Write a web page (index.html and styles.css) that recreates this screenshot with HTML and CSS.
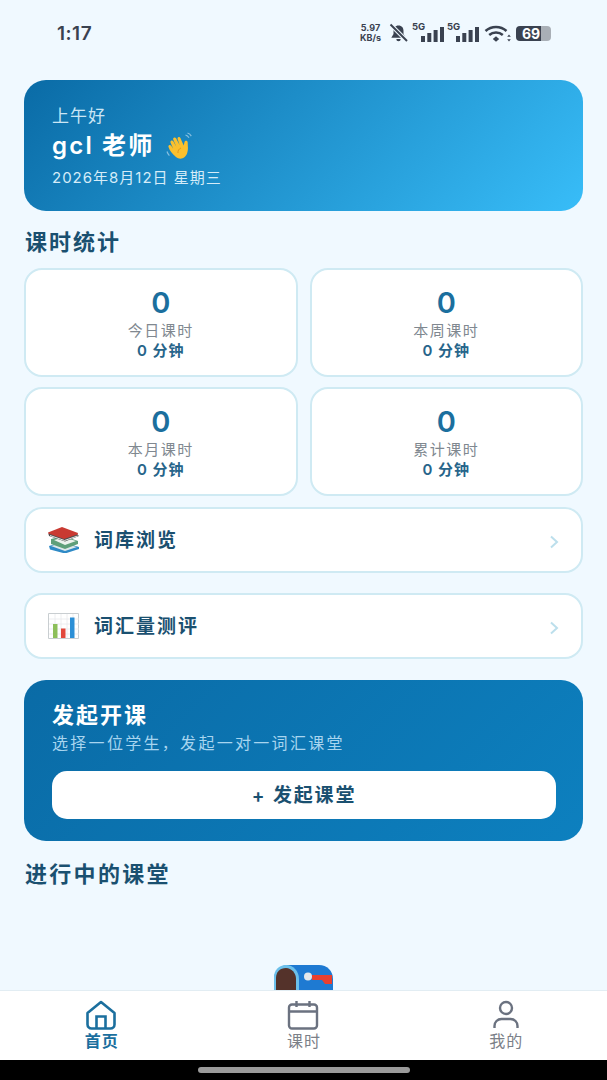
FILE: index.html
```html
<!DOCTYPE html>
<html lang="zh-CN">
<head>
  <meta charset="UTF-8" />
  <meta name="viewport" content="width=device-width, initial-scale=1" />
  <title>首页</title>
  <link rel="stylesheet" href="styles.css">
</head>
<body>
  <div class="app">
    <div class="status-bar">
      <span class="clock">1:17</span>
      <div class="status-icons">
        <span class="speed">5.97<br>KB/s</span>
        <svg class="ic-bell" width="21" height="20" viewBox="0 0 21 20">
          <path d="M10.500 2.500c-3.300 0-5 2.400-5 5.300v3.200l-2.200 3.800h14.400L15.500 11V7.800c0-2.900-1.700-5.300-5-5.300z" fill="#3a4250"/>
          <path d="M8.300 16h4.400a2.200 2.200 0 0 1-4.400 0z" fill="#3a4250"/>
          <path d="M2.500 1.500L19 18" stroke="#f0f9ff" stroke-width="4"/>
          <path d="M2.500 1.500L19 18" stroke="#3a4250" stroke-width="1.900"/>
        </svg>
        <div class="net">
          <span class="net-label">5G</span>
          <svg width="23" height="15" viewBox="0 0 23 15"><path d="M0 9h4v6H0zM6.300 6h4v9h-4zM12.600 3h4v12h-4zM19 0h4v15h-4z" fill="#3a4250"/></svg>
        </div>
        <div class="net">
          <span class="net-label">5G</span>
          <svg width="23" height="15" viewBox="0 0 23 15"><path d="M0 9h4v6H0zM6.300 6h4v9h-4zM12.600 3h4v12h-4zM19 0h4v15h-4z" fill="#3a4250"/></svg>
        </div>
        <svg class="ic-wifi" width="27" height="17" viewBox="0 0 27 17">
          <path d="M1.500 6C7.500.6 16.500.6 22.500 6M5.200 10c3.800-3.300 9.800-3.300 13.600 0" fill="none" stroke="#3a4250" stroke-width="2.500"/>
          <path d="M12 11.200l3.200 2.800L12 16.800 8.800 14z" fill="#3a4250"/>
          <path d="M25 9.500l1.800 2.300h-3.600zM25 16.500l-1.800-2.300h3.600z" fill="#3a4250"/>
        </svg>
        <div class="battery"><span class="battery-level">69</span></div>
      </div>
    </div>

    <main class="content">
      <section class="hero">
        <p class="hero-greet">上午好</p>
        <h1 class="hero-name">gcl 老师
          <svg class="wave" width="30" height="28" viewBox="0 0 30 28">
            <path d="M10 25C6 22 3.500 18 2.500 15c-.6-1.800 1.700-2.800 2.700-1.200l2 3L4.500 10.500c-.7-1.800 1.800-3 2.800-1.300l3 5.500L7.200 7.500c-.7-1.900 1.900-3 2.900-1.200l3.600 7L11.600 7c-.5-1.800 2-2.700 2.800-1l3.300 7.500.8-3.500c.5-2 3.300-1.700 3.200.3-.1 3.300.8 6-.3 10C20 26.500 14 28.500 10 25z" fill="#fbc02d"/>
            <path d="M15 16c-2 .8-3.300 2.600-3 5" fill="none" stroke="#e0961a" stroke-width="1"/>
            <path d="M1 19.500c.5 1.600 1.300 3 2.400 4.100" fill="none" stroke="#86bfe0" stroke-width="1.200"/>
            <path d="M19.500 3c1.500.4 2.700 1.400 3.500 2.800M21.500 1c1.600.5 3 1.600 3.800 3.100" fill="none" stroke="#86bfe0" stroke-width="1.200"/>
          </svg>
        </h1>
        <p class="hero-date">2026年8月12日 星期三</p>
      </section>

      <h2 class="section-title stats-title">课时统计</h2>
      <div class="stats">
        <div class="stat"><div class="stat-num">0</div><div class="stat-label">今日课时</div><div class="stat-min">0 分钟</div></div>
        <div class="stat"><div class="stat-num">0</div><div class="stat-label">本周课时</div><div class="stat-min">0 分钟</div></div>
        <div class="stat"><div class="stat-num">0</div><div class="stat-label">本月课时</div><div class="stat-min">0 分钟</div></div>
        <div class="stat"><div class="stat-num">0</div><div class="stat-label">累计课时</div><div class="stat-min">0 分钟</div></div>
      </div>

      <div class="link-row first">
        <svg class="link-icon" width="32" height="26" viewBox="0 0 32 26">
          <path d="M1 19l13-4 17 5v2L17 26.500 2 22.500z" fill="#2f8ac6"/>
          <path d="M3 19l11-3 15 4-12 4z" fill="#dfe8ea"/>
          <path d="M3 12l13-3 14 5v3l-13 5-14-5z" fill="#5f9f7a"/>
          <path d="M6 13l10-2.500 12 3.500-11 4z" fill="#eef2ee"/>
          <path d="M0 5.500L14 0l16 6-.5 2L16 13 1 8z" fill="#c93a32"/>
          <path d="M.5 6.500L16 12 29.500 7.500 31 9 17 14.500 1 9z" fill="#4b4f52"/>
          <path d="M2 8.500L16.500 13.500 29.500 9" fill="none" stroke="#e6e6e0" stroke-width="1"/>
        </svg>
        <span class="link-text">词库浏览</span>
        <svg class="chev" width="10" height="14" viewBox="0 0 10 14"><path d="M2 1.500L8 7l-6 5.500" fill="none" stroke="#bcdfec" stroke-width="2"/></svg>
      </div>
      <div class="link-row second">
        <svg class="link-icon" width="32" height="26" viewBox="0 0 32 26">
          <path d="M.5.500h30v25H.5z" fill="#fff" stroke="#c9ced1"/>
          <path d="M1 6h30M1 11h30M1 16h30M1 21h30M7 1v24M13 1v24M19 1v24M25 1v24" stroke="#e8eaec" stroke-width=".8"/>
          <path d="M5 11h4.500v14H5z" fill="#8dbf5a"/>
          <path d="M13 15.500h4.500V25H13z" fill="#e2483c"/>
          <path d="M22 4.500h4.500V25H22z" fill="#2b8fd6"/>
        </svg>
        <span class="link-text">词汇量测评</span>
        <svg class="chev" width="10" height="14" viewBox="0 0 10 14"><path d="M2 1.500L8 7l-6 5.500" fill="none" stroke="#bcdfec" stroke-width="2"/></svg>
      </div>

      <section class="cta">
        <h2 class="cta-title">发起开课</h2>
        <p class="cta-sub">选择一位学生，发起一对一词汇课堂</p>
        <button class="cta-btn">+ 发起课堂</button>
      </section>

      <h2 class="section-title live-title">进行中的课堂</h2>

      <div class="empty">
        <svg width="60" height="60" viewBox="0 0 60 60">
          <path d="M14 0h31c8 0 14 6 14 14v46H0V14C0 6 6 0 14 0z" fill="#1e7ad2"/>
          <path d="M12 0c7 0 13 6 13 14v46H0V12C0 5 5 0 12 0z" fill="#6cc0ea"/>
          <path d="M12 3c5.500 0 10 5 10 11v46H2V13C2 7 6 3 12 3z" fill="#54322a"/>
          <path d="M38 10h20v9h-7l-3-4h-10z" fill="#e8402f"/>
          <circle cx="34" cy="11.500" r="4" fill="#e4e8ec"/>
        </svg>
      </div>
    </main>

    <nav class="tabbar">
      <div class="tab active">
        <svg width="32" height="30" viewBox="0 0 32 30">
          <path d="M2.500 13L16 2l13.500 11v11.500a4 4 0 0 1-4 4h-19a4 4 0 0 1-4-4z" fill="none" stroke="#1b6f9e" stroke-width="2.600" stroke-linejoin="round"/>
          <path d="M11.500 28V16.500h9V28" fill="none" stroke="#1b6f9e" stroke-width="2.600"/>
        </svg>
        <span>首页</span>
      </div>
      <div class="tab">
        <svg width="32" height="30" viewBox="0 0 32 30">
          <rect x="2" y="4.500" width="28" height="24" rx="3" fill="none" stroke="#6b7280" stroke-width="2.400"/>
          <path d="M2 11.500h28M9.500 1v6M22.500 1v6" fill="none" stroke="#6b7280" stroke-width="2.400"/>
        </svg>
        <span>课时</span>
      </div>
      <div class="tab">
        <svg width="32" height="30" viewBox="0 0 32 30">
          <circle cx="16" cy="8" r="6" fill="none" stroke="#6b7280" stroke-width="2.400"/>
          <path d="M4.500 28v-2c0-4 3-7 7-7h9c4 0 7 3 7 7v2" fill="none" stroke="#6b7280" stroke-width="2.400"/>
        </svg>
        <span>我的</span>
      </div>
    </nav>
    <div class="home-bar"><span class="home-pill"></span></div>
  </div>
</body>
</html>
```

FILE: styles.css
```css
* {
  box-sizing: border-box;
}
html,
body {
  margin: 0;
  padding: 0;
}
body {
  font-family: "Inter", "Noto Sans CJK SC", sans-serif;
  background: #f0f9ff;
  color: #164e63;
}
h1,
h2,
p {
  margin: 0;
}
.app {
  width: 607px;
  height: 1080px;
  display: flex;
  flex-direction: column;
  overflow: hidden;
}
.status-bar {
  flex: none;
  height: 66px;
  padding: 0 56px 0 57px;
  display: flex;
  justify-content: space-between;
  align-items: center;
  color: #3a4250;
}
.clock {
  font-size: 19px;
  font-weight: 600;
  letter-spacing: 0.5px;
}
.status-icons {
  display: flex;
  align-items: center;
  gap: 3px;
}
.speed {
  width: 25px;
  margin-right: 2px;
  font-size: 9px;
  font-weight: 700;
  line-height: 10px;
  text-align: center;
}
.net {
  display: flex;
  align-items: flex-end;
  height: 18px;
  width: 32px;
  position: relative;
  justify-content: flex-end;
}
.net-label {
  position: absolute;
  left: 0;
  top: -3px;
  font-size: 9.500px;
  font-weight: 700;
}
.ic-wifi {
  margin-left: 2px;
}
.battery {
  width: 35px;
  height: 15px;
  margin-left: 2px;
  border-radius: 4px;
  background: linear-gradient(90deg, #3a4250 0 72%, #a9afb6 72%);
  text-align: center;
}
.battery-level {
  display: block;
  color: #fff;
  font-size: 14px;
  font-weight: 700;
  line-height: 15px;
  padding-right: 5px;
}
.content {
  flex: 1;
  min-height: 0;
  overflow: hidden;
  padding: 14px 24px 0;
  display: flex;
  flex-direction: column;
}
.hero {
  flex: none;
  height: 131px;
  border-radius: 22px;
  padding: 26px 28px 0;
  color: #fff;
  background: linear-gradient(135deg, #0a6ba6 0%, #38bdf8 100%);
}
.hero-greet {
  font-size: 17px;
  letter-spacing: 1px;
  line-height: 20px;
  color: #cbe6f5;
}
.hero-name {
  font-size: 24px;
  font-weight: 600;
  letter-spacing: 2.200px;
  line-height: 32px;
  margin-top: 4px;
  display: flex;
  align-items: center;
  gap: 11px;
}
.hero-date {
  font-size: 15px;
  letter-spacing: 1px;
  line-height: 20px;
  margin-top: 6px;
  color: #d5ecf8;
}
.section-title {
  font-size: 22px;
  font-weight: 600;
  letter-spacing: 2px;
  line-height: 26px;
  padding-left: 1px;
  color: #1a5070;
}
.stats-title {
  margin-top: 18px;
}
.stats {
  margin-top: 13px;
  display: grid;
  grid-template-columns: 1fr 1fr;
  gap: 10px 12px;
}
.stat {
  height: 109px;
  background: #fff;
  border: 2px solid #cfeaf3;
  border-radius: 18px;
  padding-top: 16px;
  text-align: center;
}
.stat-num {
  font-size: 29px;
  font-weight: 600;
  line-height: 34px;
  color: #1b6f9e;
}
.stat-label {
  font-size: 15px;
  letter-spacing: 1.500px;
  line-height: 20px;
  margin-top: 1px;
  color: #808890;
}
.stat-min {
  font-size: 15px;
  font-weight: 600;
  letter-spacing: 1px;
  line-height: 20px;
  color: #27658a;
}
.link-row {
  flex: none;
  height: 66px;
  background: #fff;
  border: 2px solid #cfeaf3;
  border-radius: 18px;
  padding: 0 22px;
  display: flex;
  align-items: center;
}
.link-row.first {
  margin-top: 11px;
}
.link-row.second {
  margin-top: 20px;
}
.link-icon {
  flex: none;
}
.link-text {
  flex: 1;
  margin-left: 14px;
  font-size: 19px;
  font-weight: 600;
  letter-spacing: 2px;
  line-height: 24px;
  margin-top: 1px;
  color: #1a5070;
}
.chev {
  margin-top: 4px;
}
.cta {
  flex: none;
  height: 161px;
  margin-top: 21px;
  padding: 21px 28px 0;
  border-radius: 22px;
  background: linear-gradient(135deg, #0a6ba6 0%, #0d80bf 100%);
}
.cta-title {
  font-size: 22px;
  font-weight: 600;
  letter-spacing: 2px;
  line-height: 28px;
  color: #fff;
}
.cta-sub {
  font-size: 16px;
  letter-spacing: 2.300px;
  line-height: 20px;
  margin-top: 4px;
  color: #a8d5ef;
}
.cta-btn {
  display: block;
  width: 504px;
  height: 48px;
  margin-top: 18px;
  padding: 0 0 3px;
  border: none;
  border-radius: 15px;
  background: #fff;
  font-family: inherit;
  font-size: 19px;
  font-weight: 600;
  letter-spacing: 1.800px;
  color: #1a5070;
}
.live-title {
  margin-top: 20px;
  letter-spacing: 2.300px;
}
.empty {
  margin-top: 78px;
  text-align: center;
  line-height: 0;
}
.tabbar {
  flex: none;
  height: 70px;
  background: #fff;
  border-top: 1px solid #e2edf3;
  display: grid;
  grid-template-columns: repeat(3, 1fr);
}
.tab {
  display: flex;
  flex-direction: column;
  align-items: center;
  padding-top: 9px;
  font-size: 16px;
  letter-spacing: 1px;
  line-height: 20px;
  color: #7b8088;
}
.tab span {
  margin-top: 1px;
  padding-left: 1px;
}
.tab.active {
  color: #1b6f9e;
  font-weight: 600;
}
.home-bar {
  flex: none;
  height: 20px;
  background: #000;
  display: flex;
  justify-content: center;
  align-items: center;
}
.home-pill {
  width: 212px;
  height: 6px;
  border-radius: 3px;
  background: #9b9b9b;
}
```
